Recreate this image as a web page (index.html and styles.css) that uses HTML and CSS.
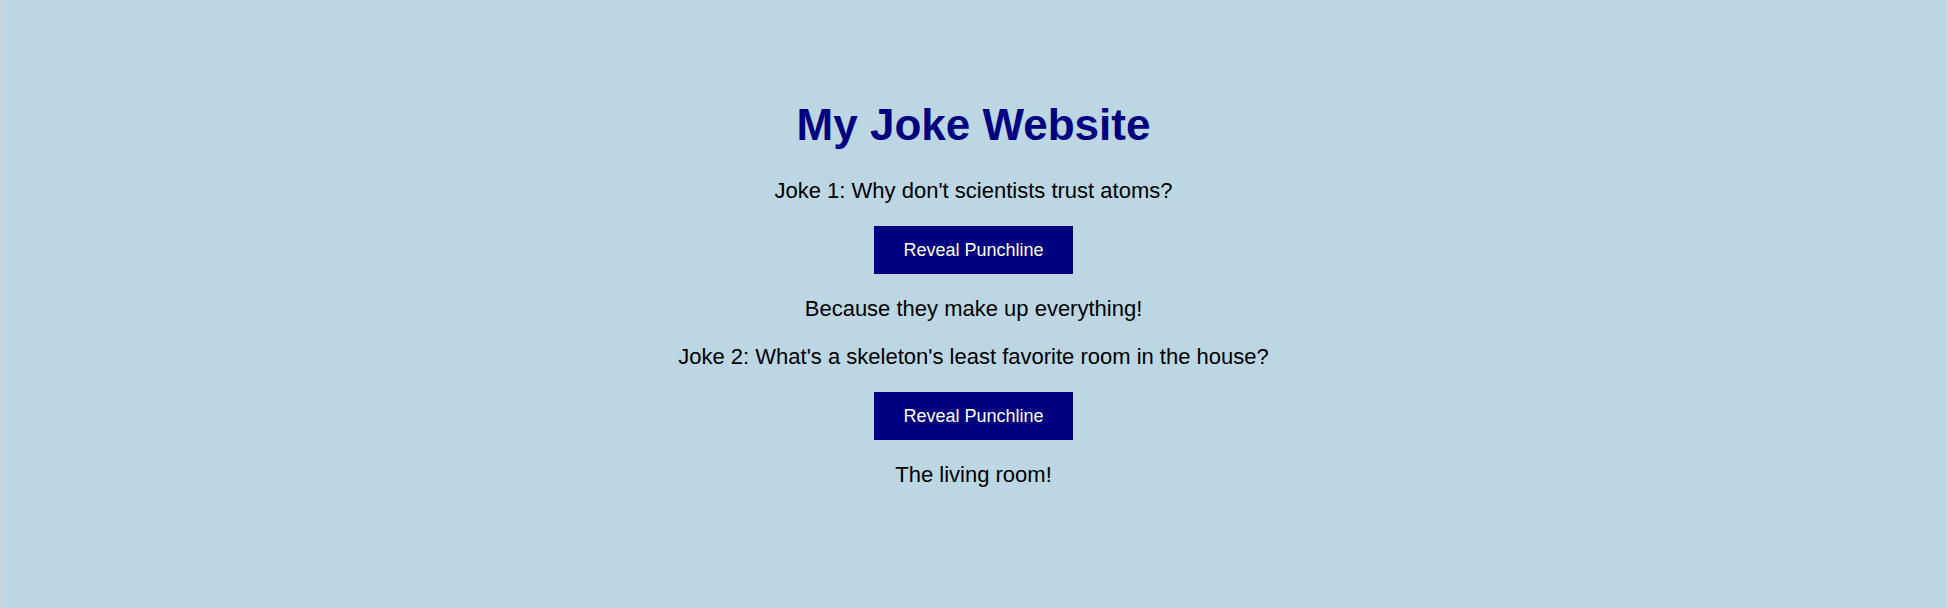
FILE: index.html
```html
<!DOCTYPE html>
<html lang="en">
<head>
<meta charset="utf-8">
<title>My Joke Website</title>
<link rel="stylesheet" href="styles.css">
</head>
<body>
<div class="page">
  <main class="jokes">
    <h1 class="title">My Joke Website</h1>
    <p class="joke">Joke 1: Why don't scientists trust atoms?</p>
    <button class="reveal" type="button">Reveal Punchline</button>
    <p class="punchline">Because they make up everything!</p>
    <p class="joke">Joke 2: What's a skeleton's least favorite room in the house?</p>
    <button class="reveal" type="button">Reveal Punchline</button>
    <p class="punchline">The living room!</p>
  </main>
</div>
</body>
</html>
```
FILE: styles.css
```css
html, body {
  margin: 0;
  padding: 0;
  height: 100%;
  background: #bcd7e3;
}

.page {
  box-sizing: border-box;
  height: 608px;
  border-left: 1px solid #cfd6da;
  border-right: 2px solid #cfd6da;
  padding-top: 100px;
  font-family: "Liberation Sans", Arial, sans-serif;
  color: #000;
}

.jokes {
  display: flex;
  flex-direction: column;
  align-items: center;
  gap: 22px;
  text-align: center;
}

.title {
  margin: 0 0 6px;
  font-size: 44px;
  line-height: 50px;
  font-weight: bold;
  color: #000080;
}

.joke,
.punchline {
  margin: 0;
  font-size: 22px;
  line-height: 26px;
}

.reveal {
  margin: 0;
  border: 0;
  padding: 13px 29px;
  background: #000080;
  color: #fff;
  font-family: "Liberation Sans", Arial, sans-serif;
  font-size: 18px;
  line-height: 22px;
  cursor: pointer;
}
```
